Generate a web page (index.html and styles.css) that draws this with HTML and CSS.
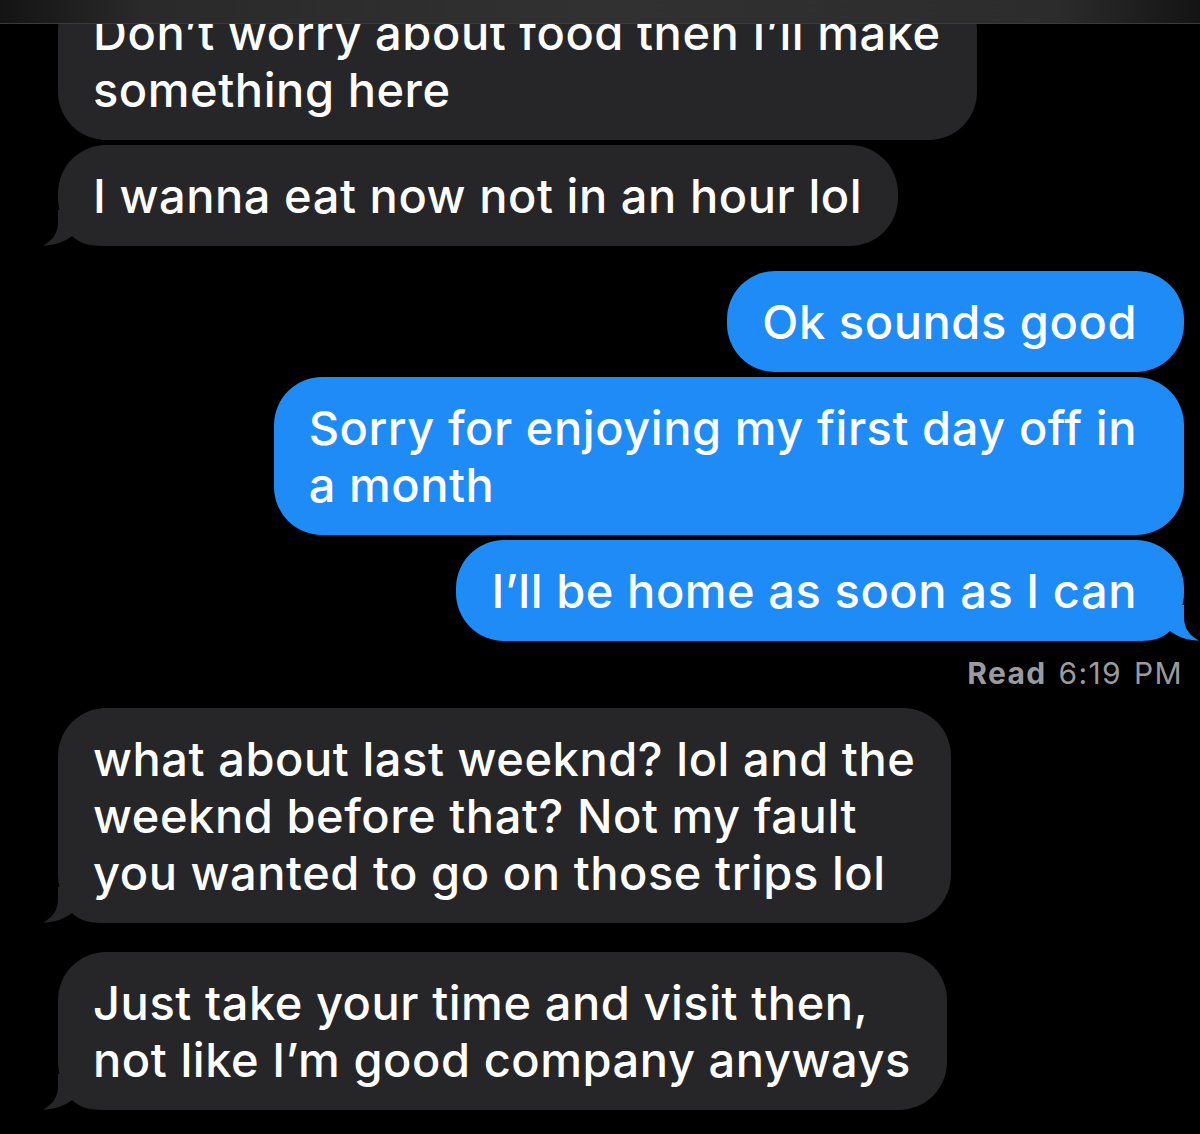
FILE: index.html
```html
<!DOCTYPE html>
<html lang="en">
<head>
    <meta charset="UTF-8">
    <meta name="viewport" content="width=device-width, initial-scale=1.0">
    <title>Messages</title>
    <link rel="stylesheet" href="styles.css">
</head>
<body>

<div class="top-bar"></div>

<section class="thread">
    <div class="group incoming">
        <div class="bubble">Don’t worry about food then I’ll make<br>something here</div>
        <div class="bubble tail">I wanna eat now not in an hour lol
            <svg class="tail-shape" viewBox="0 0 60 36" width="60" height="36"><path d="M15 0 L15 12 C15 24 9 31 0 35.5 C10 36 21 32 29 26 C36 33 46 36 60 36 L60 0 Z"/></svg>
        </div>
    </div>

    <div class="group outgoing">
        <div class="bubble">Ok sounds good</div>
        <div class="bubble">Sorry for enjoying my first day off in<br>a month</div>
        <div class="bubble tail">I’ll be home as soon as I can
            <svg class="tail-shape" viewBox="0 0 60 36" width="60" height="36"><path d="M15 0 L15 12 C15 24 9 31 0 35.5 C10 36 21 32 29 26 C36 33 46 36 60 36 L60 0 Z"/></svg>
        </div>
        <div class="receipt"><b>Read</b> 6:19 PM</div>
    </div>

    <div class="group incoming">
        <div class="bubble tail">what about last weeknd? lol and the<br>weeknd before that? Not my fault<br>you wanted to go on those trips lol
            <svg class="tail-shape" viewBox="0 0 60 36" width="60" height="36"><path d="M15 0 L15 12 C15 24 9 31 0 35.5 C10 36 21 32 29 26 C36 33 46 36 60 36 L60 0 Z"/></svg>
        </div>
    </div>

    <div class="group incoming last">
        <div class="bubble tail">Just take your time and visit then,<br>not like I’m good company anyways
            <svg class="tail-shape" viewBox="0 0 60 36" width="60" height="36"><path d="M15 0 L15 12 C15 24 9 31 0 35.5 C10 36 21 32 29 26 C36 33 46 36 60 36 L60 0 Z"/></svg>
        </div>
    </div>
</section>

</body>
</html>
```

FILE: styles.css
```css
/* Page */
body {
    margin: 0;
    background-color: #000;
    font-family: Inter, "Noto Sans", sans-serif;
    color: #fff;
    overflow: hidden;
}

/* Blurred nav bar that covers the top of the thread */
.top-bar {
    position: fixed;
    top: 0;
    left: 0;
    right: 0;
    height: 23px;
    background: linear-gradient(90deg, #141414 0%, #2a2a2a 12%, #313131 50%, #2c2c2c 88%, #141414 100%);
    border-bottom: 1px solid #3a3a3a;
    z-index: 10;
}

/* Thread */
.thread {
    display: flex;
    flex-direction: column;
    gap: 25px;
    padding: 0 16px 0 58px;
    margin-top: -18px;
}

.group {
    display: flex;
    flex-direction: column;
    gap: 5px;
}

.group.last {
    margin-top: 4px;
}

.incoming {
    align-items: flex-start;
}

.outgoing {
    align-items: flex-end;
}

/* Bubbles */
.bubble {
    position: relative;
    isolation: isolate;
    font-size: 47px;
    font-weight: 500;
    letter-spacing: 0.55px;
    line-height: 57px;
    padding: 22px 37px 22px 35px;
    border-radius: 48px;
}

.incoming .bubble {
    background-color: #262629;
    padding-right: 36px;
}

.outgoing .bubble {
    background-color: #1e8bf6;
    padding-right: 47px;
}

.tail-shape {
    position: absolute;
    bottom: 0;
    z-index: -1;
}

.incoming .tail-shape {
    left: -15px;
    fill: #262629;
}

.outgoing .tail-shape {
    right: -15px;
    fill: #1e8bf6;
    transform: scaleX(-1);
}

/* Read receipt */
.receipt {
    font-size: 30px;
    line-height: 36px;
    letter-spacing: 1.4px;
    word-spacing: 2px;
    color: #9a9a9f;
    margin: 9px 1px -8px 0;
}

.receipt b {
    font-weight: 700;
}
```
